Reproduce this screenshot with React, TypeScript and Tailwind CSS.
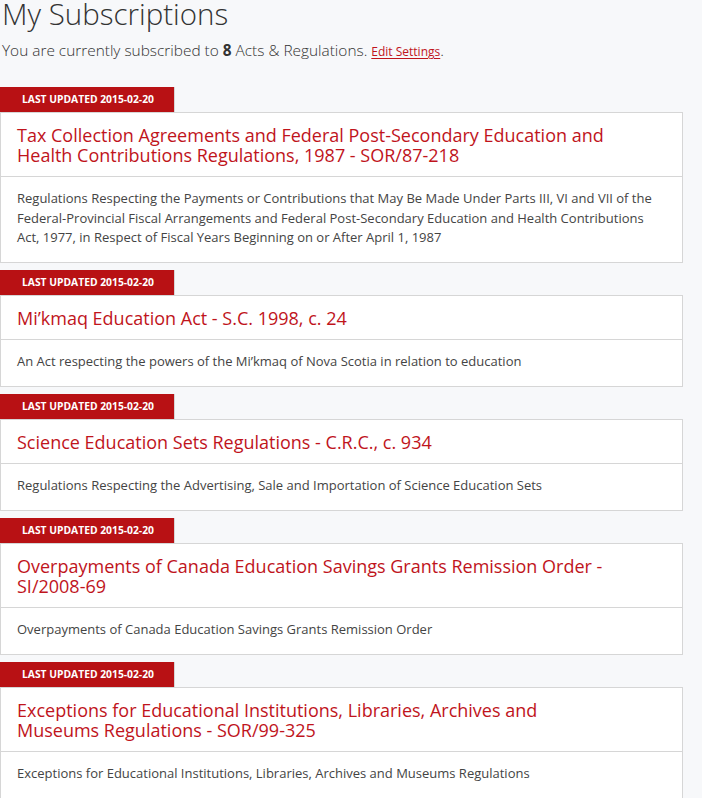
import React from "react";

const items = [
  {
    title:
      "Tax Collection Agreements and Federal Post-Secondary Education and Health Contributions Regulations, 1987 - SOR/87-218",
    desc: "Regulations Respecting the Payments or Contributions that May Be Made Under Parts III, VI and VII of the Federal-Provincial Fiscal Arrangements and Federal Post-Secondary Education and Health Contributions Act, 1977, in Respect of Fiscal Years Beginning on or After April 1, 1987",
  },
  {
    title: "Mi’kmaq Education Act - S.C. 1998, c. 24",
    desc: "An Act respecting the powers of the Mi’kmaq of Nova Scotia in relation to education",
  },
  {
    title: "Science Education Sets Regulations - C.R.C., c. 934",
    desc: "Regulations Respecting the Advertising, Sale and Importation of Science Education Sets",
  },
  {
    title: "Overpayments of Canada Education Savings Grants Remission Order - SI/2008-69",
    desc: "Overpayments of Canada Education Savings Grants Remission Order",
  },
  {
    title:
      "Exceptions for Educational Institutions, Libraries, Archives and Museums Regulations - SOR/99-325",
    desc: "Exceptions for Educational Institutions, Libraries, Archives and Museums Regulations",
  },
];

export default function App() {
  return (
    <div
      className="min-h-[798px] w-[702px] bg-[#f7f8fa] text-[#333] overflow-hidden"
      style={{ fontFamily: '"Open Sans", "Noto Sans", sans-serif' }}
    >
      <div className="w-[683px]">
        <h1 className="text-[29.5px] font-light leading-[30px] text-[#333] pl-[2px] -mt-[1px]">
          My Subscriptions
        </h1>
        <p className="mt-[11px] pl-[2px] text-[15.4px] font-light leading-[22px] text-[#333]">
          You are currently subscribed to <b className="font-bold">8</b> Acts &amp; Regulations.{" "}
          <a className="text-[12px] font-normal text-[#c0141c] underline underline-offset-2">Edit Settings</a>.
        </p>
        <div className="mt-[24px] flex flex-col gap-[7px]">
          {items.map((it, i) => (
            <div key={i}>
              <div className="w-[175px] h-[25px] bg-[#b81114] border-r border-[#d6d6d6] flex items-center pl-[22px] text-[10.3px] font-bold text-white leading-none">
                LAST UPDATED 2015-02-20
              </div>
              <div className="bg-white border border-[#d6d6d6]">
                <div className="pl-[16px] pr-[70px] pt-[12px] pb-[11px] text-[18px] leading-[20px] text-[#c0141c] border-b border-[#d6d6d6]">
                  {it.title}
                </div>
                <div className="px-[16px] pt-[12px] pb-[14.5px] text-[13px] leading-[19.5px] text-[#444]">
                  {it.desc}
                </div>
              </div>
            </div>
          ))}
        </div>
      </div>
    </div>
  );
}
